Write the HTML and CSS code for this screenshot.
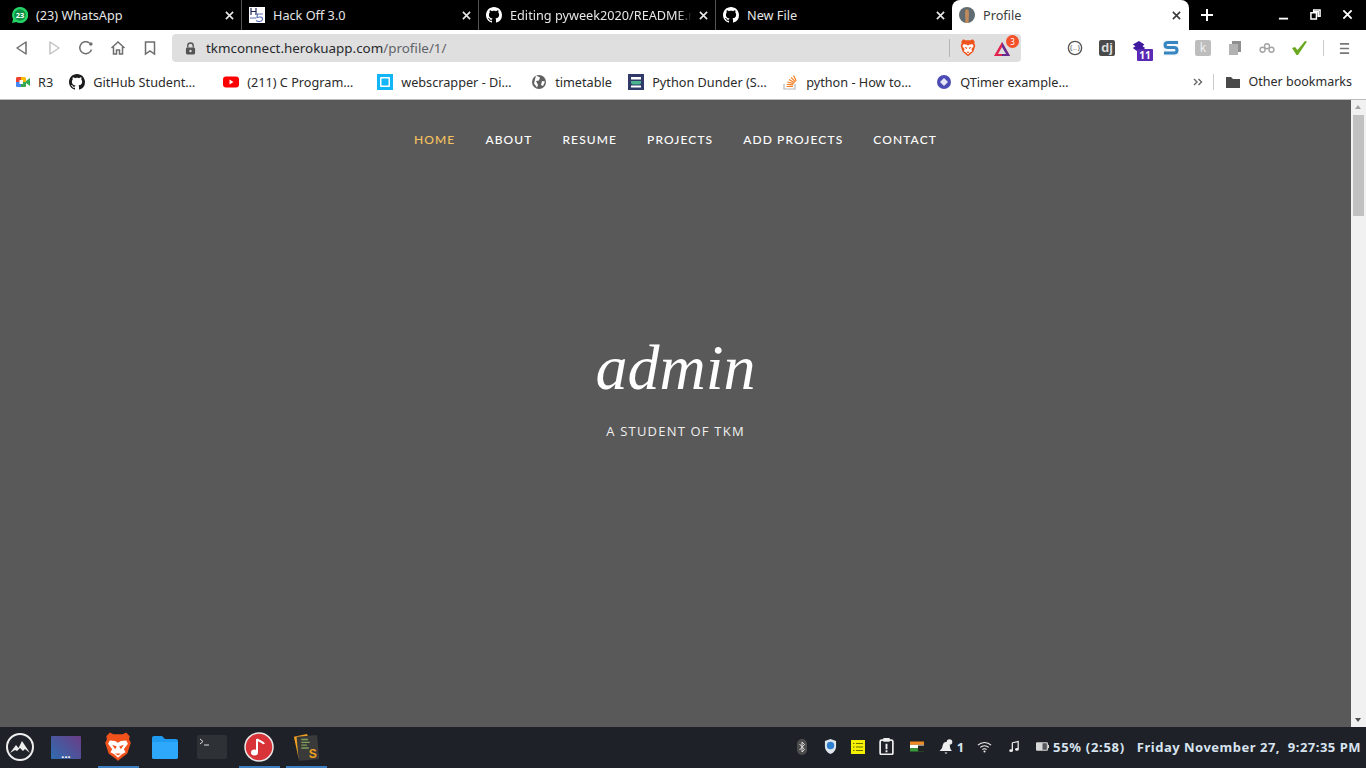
FILE: index.html
```html
<!DOCTYPE html>
<html lang="en">
<head>
    <title>Profile</title>
    <link rel="stylesheet" href="styles.css">
</head>
<body>
    <svg class="defs" width="0" height="0">
        <symbol id="gh" viewBox="0 0 16 16"><path fill="currentColor" d="M8 0C3.58 0 0 3.58 0 8c0 3.54 2.29 6.53 5.47 7.59.4.07.55-.17.55-.38 0-.19-.01-.82-.01-1.49-2.01.37-2.53-.49-2.69-.94-.09-.23-.48-.94-.82-1.13-.28-.15-.68-.52-.01-.53.63-.01 1.08.58 1.23.82.72 1.21 1.87.87 2.33.66.07-.52.28-.87.51-1.07-1.78-.2-3.64-.89-3.64-3.95 0-.87.31-1.59.82-2.15-.08-.2-.36-1.02.08-2.12 0 0 .67-.21 2.2.82.64-.18 1.32-.27 2-.27s1.36.09 2 .27c1.53-1.04 2.2-.82 2.2-.82.44 1.1.16 1.92.08 2.12.51.56.82 1.27.82 2.15 0 3.07-1.87 3.75-3.65 3.95.29.25.54.73.54 1.48 0 1.07-.01 1.93-.01 2.2 0 .21.15.46.55.38A8 8 0 0 0 16 8c0-4.42-3.58-8-8-8z"/></symbol>
        <symbol id="brave" viewBox="0 0 24 28" preserveAspectRatio="none"><path fill="#f1511b" d="M5 0.500l3 1.500h8l3-1.500 3 3.500-.5 3 1.500 3-3 10-7 6-1 1-1-1-7-6-3-10 1.500-3-.5-3z"/><path fill="#fff" d="M5 8l4.500.5 2.500 1.500 2.500-1.500L19 8l1.500 3-3.500 5 1.500 3-3 1.500L12 24l-3.500-3.500-3-1.500L7 16l-3.500-5z"/><path fill="#f1511b" d="M7 12l4 1.500-1.500 2.500zM17 12l-4 1.500 1.500 2.500zM9.500 20h5L12 22z"/></symbol>
        <symbol id="close" viewBox="0 0 10 10"><path d="M1 1l8 8M9 1l-8 8" stroke="currentColor" stroke-width="1.800" fill="none"/></symbol>
    </svg>

    <div class="tabbar">
        <div class="tab">
            <svg class="favicon" viewBox="0 0 16 16"><path fill="#25d366" d="M8 0a8 8 0 0 0-6.900 12L0 16l4.200-1.100A8 8 0 1 0 8 0z"/><circle cx="8" cy="8" r="5.800" fill="#0d8f45"/></svg>
            <span class="badge23">23</span>
            <span class="tab-title">(23) WhatsApp</span>
            <svg class="tab-x"><use href="#close"/></svg>
        </div>
        <div class="tab">
            <svg class="favicon" viewBox="0 0 16 16"><rect width="16" height="16" fill="#fff"/><path d="M2 1v7M7 1v7M2 4.500h5" stroke="#1f2a5a" stroke-width="1.200" fill="none"/><path d="M14 7H8.500L8 10.500c3-1 6-.5 5.500 2S9 15 7 13.500M1 11h6" stroke="#5a70b5" stroke-width="1.200" fill="none"/></svg>
            <span class="tab-title">Hack Off 3.0</span>
            <svg class="tab-x"><use href="#close"/></svg>
        </div>
        <div class="tab">
            <svg class="favicon tab-gh"><use href="#gh"/></svg>
            <span class="tab-title tab-fade">Editing pyweek2020/README.m</span>
            <svg class="tab-x tab-x-tight"><use href="#close"/></svg>
        </div>
        <div class="tab tab-last">
            <svg class="favicon tab-gh"><use href="#gh"/></svg>
            <span class="tab-title">New File</span>
            <svg class="tab-x"><use href="#close"/></svg>
        </div>
        <div class="tab tab-active">
            <svg class="favicon" viewBox="0 0 16 16"><circle cx="8" cy="8" r="8" fill="#5f6b70"/><path d="M6.500 2.500h3l.5 4-.5 9.500h-3L6 6.500z" fill="#c08a5c"/></svg>
            <span class="tab-title">Profile</span>
            <svg class="tab-x"><use href="#close"/></svg>
        </div>
        <svg class="newtab" viewBox="0 0 12 12"><path d="M6 0v12M0 6h12" stroke="#fff" stroke-width="2"/></svg>
        <div class="winctl">
            <svg viewBox="0 0 12 12"><path d="M1 10.500h10" stroke="#fff" stroke-width="2"/></svg>
            <svg viewBox="0 0 12 12"><path d="M4 1h7v7H9V3H4zM1 4h6v7H1z" fill="none" stroke="#fff" stroke-width="1.600"/></svg>
            <svg viewBox="0 0 12 12"><path d="M1.500 1.500l9 9M10.500 1.500l-9 9" stroke="#fff" stroke-width="2"/></svg>
        </div>
    </div>

    <div class="toolbar">
        <svg class="tool" viewBox="0 0 16 16"><path d="M12 2v12L3 8z" fill="none" stroke="#6e6e6e" stroke-width="1.500" stroke-linejoin="round"/></svg>
        <svg class="tool" viewBox="0 0 16 16"><path d="M4 2v12l9-6z" fill="none" stroke="#c2c2c2" stroke-width="1.500" stroke-linejoin="round"/></svg>
        <svg class="tool" viewBox="0 0 16 16"><path d="M13.500 9.500A6 6 0 1 1 11.500 3" fill="none" stroke="#6e6e6e" stroke-width="1.500"/><circle cx="12.800" cy="4" r="1.800" fill="#6e6e6e"/></svg>
        <svg class="tool" viewBox="0 0 16 16"><path d="M1.500 8L8 2l6.500 6M3.500 7v7H6.500v-4h3v4h3V7" fill="none" stroke="#6e6e6e" stroke-width="1.500"/></svg>
        <svg class="tool" viewBox="0 0 16 16"><path d="M3.500 2h9v12L8 11l-4.500 3z" fill="none" stroke="#6e6e6e" stroke-width="1.500"/></svg>
        <div class="omnibox">
            <svg class="lock" viewBox="0 0 12 14"><path d="M3 6V4a3 3 0 0 1 6 0v2" fill="none" stroke="#555" stroke-width="1.500"/><rect x="1" y="6" width="10" height="7.500" rx="1.500" fill="#555"/><circle cx="6" cy="9.700" r="1.300" fill="#dfdfdf"/></svg>
            <span class="url">tkmconnect.herokuapp.com<span class="url-path">/profile/1/</span></span>
            <span class="omni-sep"></span>
            <svg class="omni-brave"><use href="#brave"/></svg>
            <span class="bat-wrap">
                <svg class="omni-bat" viewBox="0 0 18 16"><path d="M9 1l8 14H1z" fill="#e0234e"/><path d="M9 1l8 14H9z" fill="#662d91"/><path d="M9 6l4 7H5z" fill="#dfdfdf"/></svg>
                <span class="bat-count">3</span>
            </span>
        </div>
        <div class="extensions">
            <svg class="ext" viewBox="0 0 18 18"><circle cx="9" cy="9" r="7.500" fill="#fff" stroke="#555" stroke-width="1.500"/><text x="9" y="11.500" class="ext-code">{..}</text></svg>
            <span class="ext-dj">dj</span>
            <span class="ext-wrap">
                <svg class="ext" viewBox="0 0 18 18"><path d="M9 1l6 4-2 2 3 2-7 5-7-5 3-2-3-2z" fill="#3f1aa0"/></svg>
                <span class="ext-11">11</span>
            </span>
            <svg class="ext" viewBox="0 0 16 16"><rect width="16" height="16" fill="#f4f7fa"/><path d="M15 2.500H5c-4 0-4 5 0 5h6c4 0 4 5.500 0 5.500H1" fill="none" stroke="#3585c0" stroke-width="3"/></svg>
            <span class="ext-k">k</span>
            <svg class="ext" viewBox="0 0 16 16"><rect x="5" y="1" width="9" height="11" fill="#8f8f8f"/><rect x="2" y="4" width="9" height="11" fill="#b2b2b2"/></svg>
            <svg class="ext" viewBox="0 0 18 12"><g fill="none" stroke="#a3a3a3" stroke-width="1.500"><circle cx="4" cy="8" r="2.800"/><circle cx="9" cy="4" r="2.800"/><circle cx="14" cy="8" r="2.800"/></g></svg>
            <svg class="ext" viewBox="0 0 16 16"><path d="M1 8l3-1 2.500 3L14 1l2 .5L7 15h-1.500z" fill="#6aa821"/></svg>
            <span class="tool-sep"></span>
            <svg class="menu" viewBox="0 0 12 14"><path d="M1 2h10M1 7h10M1 12h10" stroke="#777" stroke-width="1.800"/></svg>
        </div>
    </div>

    <div class="bookmarks">
        <div class="bm bm-tight">
            <svg class="bm-icon" viewBox="0 0 16 16"><rect x="1" y="3" width="10" height="10" rx="1.500" fill="#fbbc04"/><path d="M1 8V4.500A1.500 1.500 0 0 1 2.500 3H6v5z" fill="#ea4335"/><path d="M1 8h5v5H2.500A1.500 1.500 0 0 1 1 11.500z" fill="#4285f4"/><path d="M6 8h5v3.500a1.500 1.500 0 0 1-1.500 1.500H6z" fill="#34a853"/><path d="M11 7l4-3v8l-4-3z" fill="#34a853"/><rect x="4.500" y="6" width="3.500" height="4" fill="#fff"/></svg>
            <span>R3</span>
        </div>
        <div class="bm">
            <svg class="bm-icon bm-gh"><use href="#gh"/></svg>
            <span class="bm-long">GitHub Student…</span>
        </div>
        <div class="bm">
            <svg class="bm-icon" viewBox="0 0 16 16"><rect y="2.500" width="16" height="11" rx="3" fill="#f00"/><path d="M6.500 5.500v5l4-2.500z" fill="#fff"/></svg>
            <span class="bm-long">(211) C Program…</span>
        </div>
        <div class="bm">
            <svg class="bm-icon" viewBox="0 0 16 16"><rect width="16" height="16" fill="#12b5f5"/><rect x="3" y="3" width="10" height="10" rx="1" fill="#fff"/><rect x="4.500" y="4.500" width="7" height="7" fill="#12b5f5"/></svg>
            <span class="bm-long">webscrapper - Di…</span>
        </div>
        <div class="bm">
            <svg class="bm-icon" viewBox="0 0 16 16"><circle cx="8" cy="8" r="7" fill="#606060"/><path d="M5 1.500l4 2-1 3-3 .5 2 4-1 2.500-3-4zM11 7l3 .5-2 4.500-2-1z" fill="#fff"/></svg>
            <span class="bm-short">timetable</span>
        </div>
        <div class="bm">
            <svg class="bm-icon" viewBox="0 0 16 16"><rect width="16" height="16" fill="#2f3a68"/><rect x="3" y="3" width="10" height="2.500" fill="#fff"/><path d="M3 7h10v1.500a2 2 0 0 1-2 2H5a2 2 0 0 1-2-2z" fill="#47b58e"/><rect x="3" y="11.500" width="10" height="2" fill="#fff"/></svg>
            <span class="bm-long">Python Dunder (S…</span>
        </div>
        <div class="bm">
            <svg class="bm-icon" viewBox="0 0 16 16"><path d="M2 10v5h11v-5" fill="none" stroke="#b5b5b5" stroke-width="1.200"/><path d="M4.500 12.500h6.500M4.800 10.300l6.400.6M5.500 8l6.200 1.700M7 5.500l5.600 3.200M9 3.300l4.500 4.600M11.500 1.500l2.800 5.500" stroke="#f48024" stroke-width="1.200"/></svg>
            <span class="bm-long">python - How to…</span>
        </div>
        <div class="bm">
            <svg class="bm-icon" viewBox="0 0 16 16"><circle cx="8" cy="8" r="7" fill="#4b4bb5"/><path d="M8 4l4 4-4 4-4-4z" fill="#e6e6f7"/></svg>
            <span>QTimer example…</span>
        </div>
        <div class="bm-right">
            <svg class="bm-more" viewBox="0 0 10 8"><path d="M1 1l3 3-3 3M5.500 1l3 3-3 3" fill="none" stroke="#666" stroke-width="1.400"/></svg>
            <span class="bm-sep"></span>
            <div class="bm">
                <svg class="bm-icon" viewBox="0 0 16 16"><path d="M1 3h5l2 2h7v9H1z" fill="#4a4a4a"/></svg>
                <span>Other bookmarks</span>
            </div>
        </div>
    </div>

    <div class="viewport">
        <main class="page">
            <nav class="nav">
                <a class="nav-link nav-current">HOME</a>
                <a class="nav-link">ABOUT</a>
                <a class="nav-link">RESUME</a>
                <a class="nav-link">PROJECTS</a>
                <a class="nav-link">ADD PROJECTS</a>
                <a class="nav-link">CONTACT</a>
            </nav>
            <section class="hero">
                <h1 class="hero-name">admin</h1>
                <p class="hero-sub">A STUDENT OF TKM</p>
            </section>
        </main>
        <div class="scrollbar">
            <span class="arrow-up"></span>
            <span class="thumb"></span>
            <span class="arrow-down"></span>
        </div>
    </div>

    <footer class="taskbar">
        <div class="launchers">
            <span class="launch launch-menu">
                <svg viewBox="0 0 28 28"><circle cx="14" cy="14" r="13" fill="#20232a" stroke="#eee" stroke-width="2"/><path d="M4 20l6-8 2.500 3L16 8l8 12-5-4-2 2-3-3-3 3-2-1z" fill="#eee"/></svg>
            </span>
            <span class="launch launch-desk"><span class="desk-dots">...</span></span>
            <span class="launch launch-on">
                <svg class="brave-big"><use href="#brave"/></svg>
            </span>
            <span class="launch">
                <svg viewBox="0 0 28 24"><path d="M1 3a2 2 0 0 1 2-2h8l3 3h11a2 2 0 0 1 2 2v16a2 2 0 0 1-2 2H3a2 2 0 0 1-2-2z" fill="#1e9bf0"/><path d="M1 7h26v15a2 2 0 0 1-2 2H3a2 2 0 0 1-2-2z" fill="#2ea8fb"/></svg>
            </span>
            <span class="launch">
                <svg class="term" viewBox="0 0 30 24"><rect width="30" height="24" rx="2" fill="#2e3136"/><path d="M3 4l3 2.500L3 9M7 10h5" fill="none" stroke="#ddd" stroke-width="1"/></svg>
            </span>
            <span class="launch launch-on launch-music">
                <svg viewBox="0 0 30 30"><circle cx="15" cy="15" r="14" fill="#d9333a" stroke="#e8e8e8" stroke-width="1.500"/><path d="M13 7v13M13 7c2 3 6 2 7 5" fill="none" stroke="#fff" stroke-width="2"/><ellipse cx="10.500" cy="20.500" rx="3.500" ry="3" fill="#fff"/></svg>
            </span>
            <span class="launch launch-on">
                <svg viewBox="0 0 28 30"><path d="M1 4l14-3 3 6-12 20z" fill="#f0a020"/><rect x="5" y="3" width="22" height="26" rx="1" fill="#3a3a3a" transform="rotate(-5 16 16)"/><path d="M9 7h7M9 10h9M9 13h6M9 16h8" stroke="#7fa05a" stroke-width="1.500"/><text x="17" y="27" class="sublime-s">S</text></svg>
            </span>
        </div>
        <div class="tray">
            <svg class="tray-bt" viewBox="0 0 10 16"><rect width="10" height="16" rx="5" fill="#4c4c4c"/><path d="M2.500 5l5 5.500L5 13V3l2.500 2.500-5 5.500" fill="none" stroke="#ddd" stroke-width="1"/></svg>
            <svg class="tray-shield" viewBox="0 0 14 16"><path d="M7 0l6 2v6c0 4-3 7-6 8-3-1-6-4-6-8V2z" fill="#dfe6ee"/><circle cx="7" cy="7" r="4" fill="#2f7fd0"/></svg>
            <svg class="tray-list" viewBox="0 0 14 14"><rect width="14" height="14" fill="#f4f000"/><path d="M2 3.500h1.500M5 3.500h7M2 7h1.500M5 7h7M2 10.500h1.500M5 10.500h7" stroke="#6b6b00" stroke-width="1.200"/></svg>
            <svg class="tray-clip" viewBox="0 0 14 16"><rect x="1" y="2" width="12" height="13.500" rx="1.500" fill="none" stroke="#eee" stroke-width="1.600"/><rect x="4" y="0" width="6" height="3.500" fill="#eee"/><path d="M7 5.500v5M7 11.500v2" stroke="#eee" stroke-width="1.800"/></svg>
            <svg class="tray-flag" viewBox="0 0 14 10"><rect width="14" height="3.300" fill="#f08a24"/><rect y="3.300" width="14" height="3.400" fill="#fff"/><rect y="6.700" width="14" height="3.300" fill="#3a9a3a"/><rect x="8" y="4" width="6" height="6" fill="#222"/></svg>
            <span class="tray-item">
                <svg class="tray-bell" viewBox="0 0 14 16"><path d="M7 3c3 0 4 2 4 5 0 2 2 4 2 4H1c-1 0 1-1 2-3 1-3 1-6 4-6zM5.500 13.500h3L7 15z" fill="#eee"/><circle cx="10.500" cy="3" r="2.800" fill="#eee"/></svg>
                <span class="tray-text">1</span>
            </span>
            <svg class="tray-wifi" viewBox="0 0 16 12"><path d="M1 4a10 10 0 0 1 14 0M3.500 6.500a6.500 6.500 0 0 1 9 0M5.800 8.800a3 3 0 0 1 4.400 0" fill="none" stroke="#eee" stroke-width="1.200"/><circle cx="8" cy="10.800" r="1.100" fill="#eee"/></svg>
            <svg class="tray-note" viewBox="0 0 12 14"><path d="M4 2.500L11 1v9M4 2.500V12" fill="none" stroke="#eee" stroke-width="1.500"/><ellipse cx="2.500" cy="12" rx="2.200" ry="1.700" fill="#eee"/><ellipse cx="9.500" cy="10.500" rx="2.200" ry="1.700" fill="#eee"/></svg>
            <span class="tray-item tray-battery">
                <svg class="tray-batt" viewBox="0 0 12 8"><rect width="11" height="8" rx="1" fill="#d8d8d8"/><rect x="6" y="1" width="4" height="6" fill="#55585c"/><rect x="11" y="2.500" width="1" height="3" fill="#d8d8d8"/></svg>
                <span class="tray-text tray-spaced">55% (2:58)</span>
            </span>
            <span class="tray-text tray-spaced tray-clock">Friday November 27,&nbsp; 9:27:35 PM</span>
        </div>
    </footer>
</body>
</html>
```

FILE: styles.css
```css
*{box-sizing: border-box;}

html, body{
    margin: 0;
    height: 100%;
}

body{
    display: flex;
    flex-direction: column;
    height: 768px;
    overflow: hidden;
    font-family: "Noto Sans", sans-serif;
    background-color: #fff;
}

.defs{
    position: absolute;
}

/* tab strip */
.tabbar{
    display: flex;
    align-items: flex-end;
    height: 30px;
    padding-left: 5px;
    background-color: #000;
    color: #e6e6e6;
    flex-shrink: 0;
}

.tab{
    position: relative;
    display: flex;
    align-items: center;
    width: 237px;
    height: 30px;
    padding-left: 7px;
    border-right: 1px solid #555;
    font-size: 12.7px;
}

.tab:nth-child(n+4){
    border-right: none;
}

.tab-last{
    width: 236px;
}

.tab-active{
    background-color: #fff;
    color: #3c3c3c;
    border-radius: 8px 8px 0 0;
    border-right: none;
}

.favicon{
    width: 16px;
    height: 16px;
    flex-shrink: 0;
}

.tab-gh{
    color: #fff;
}

.badge23{
    position: absolute;
    left: 7px;
    width: 16px;
    text-align: center;
    font-size: 7.5px;
    font-weight: bold;
    color: #fff;
}

.tab-title{
    margin-left: 8px;
    width: 180px;
    flex-shrink: 0;
    overflow: hidden;
    white-space: nowrap;
}

.tab-fade{
    width: 196px;
    -webkit-mask-image: linear-gradient(to right, #000 168px, transparent 182px);
    mask-image: linear-gradient(to right, #000 168px, transparent 182px);
}

.tab-x{
    width: 9px;
    height: 9px;
    margin-left: 9px;
    flex-shrink: 0;
}

.tab-x-tight{
    margin-left: -7px;
}

.newtab{
    width: 12px;
    height: 12px;
    margin: 0 0 9px 12px;
}

.winctl{
    display: flex;
    gap: 21px;
    margin: 0 0 10px 65px;
}

.winctl svg{
    width: 11px;
    height: 11px;
}

/* address bar */
.toolbar{
    display: flex;
    align-items: center;
    height: 36px;
    padding-left: 14px;
    flex-shrink: 0;
}

.tool{
    width: 16px;
    height: 16px;
    margin-right: 16px;
}

.omnibox{
    display: flex;
    align-items: center;
    width: 849px;
    height: 28px;
    margin-left: -2px;
    padding-left: 13px;
    background-color: #dfdfdf;
    border-radius: 4px;
}

.lock{
    width: 11px;
    height: 13px;
}

.url{
    margin-left: 10px;
    width: 743px;
    font-size: 13.4px;
    color: #26292c;
    white-space: nowrap;
}

.url-path{
    color: #5f6368;
}

.omni-sep{
    width: 1px;
    height: 18px;
    background-color: #b5b5b5;
}

.omni-brave{
    width: 16px;
    height: 18px;
    margin-left: 10px;
}

.bat-wrap{
    position: relative;
    margin-left: 17px;
    height: 16px;
}

.omni-bat{
    width: 18px;
    height: 16px;
}

.bat-count{
    position: absolute;
    left: 13px;
    top: -5px;
    width: 13px;
    height: 13px;
    border-radius: 50%;
    background-color: #f4502a;
    color: #fff;
    font-size: 8px;
    line-height: 13px;
    text-align: center;
}

.extensions{
    display: flex;
    align-items: center;
    gap: 16px;
    margin-left: 46px;
}

.ext{
    display: block;
    width: 16px;
    height: 16px;
}

.ext-dj{
    width: 16px;
    height: 16px;
    background-color: #4a4a4a;
    border-radius: 2px;
    color: #ddd;
    font-family: "Liberation Sans", sans-serif;
    font-size: 13px;
    font-weight: bold;
    line-height: 15px;
    text-align: center;
}

.ext-wrap{
    position: relative;
}

.ext-11{
    position: absolute;
    left: 6px;
    top: 9px;
    width: 16px;
    height: 12px;
    background-color: #5a2ab5;
    border-radius: 1px;
    color: #fff;
    font-size: 10px;
    font-weight: bold;
    line-height: 12px;
    text-align: center;
}

.ext-k{
    width: 16px;
    height: 16px;
    background-color: #bdbdbd;
    border-radius: 2px;
    color: #eee;
    font-size: 12px;
    line-height: 15px;
    text-align: center;
}

.tool-sep{
    width: 1px;
    height: 16px;
    background-color: #ccc;
}

.menu{
    width: 11px;
    height: 13px;
    margin-left: -1px;
}

/* bookmarks bar */
.bookmarks{
    display: flex;
    align-items: center;
    gap: 16px;
    height: 34px;
    padding: 0 14px 2px 15px;
    border-bottom: 1px solid #bbb;
    font-size: 12.7px;
    color: #2b2b2b;
    white-space: nowrap;
    flex-shrink: 0;
}

.bm{
    display: flex;
    align-items: center;
    gap: 8px;
}

.bm-tight{
    gap: 7px;
}

.bm-icon{
    width: 16px;
    height: 16px;
    flex-shrink: 0;
}

.bm-gh{
    color: #1b1b1b;
}

.bm-long{
    width: 114px;
}

.bm-short{
    width: 57px;
}

.bm-right{
    display: flex;
    align-items: center;
    margin-left: auto;
    font-size: 12.5px;
}

.bm-more{
    width: 10px;
    height: 8px;
}

.bm-sep{
    width: 1px;
    height: 16px;
    margin: 0 11px 0 10px;
    background-color: #ccc;
}

/* page */
.viewport{
    display: flex;
    flex: 1;
    min-height: 0;
}

.page{
    flex: 1;
    background-color: #595959;
}

.nav{
    display: flex;
    justify-content: center;
    gap: 30px;
    padding-top: 32px;
    font-family: Lato, sans-serif;
    font-size: 12px;
    letter-spacing: 1.1px;
    font-weight: 500;
    color: #fff;
}

.nav-link{
    line-height: 16px;
}

.nav-current{
    color: #f7c35f;
}

.hero{
    text-align: center;
    margin-top: 180px;
    color: #fff;
}

.hero-name{
    margin: 0;
    font-family: "Liberation Serif", serif;
    font-style: italic;
    font-weight: normal;
    font-size: 64px;
    line-height: 80px;
}

.hero-sub{
    margin: 15px 0 0;
    font-family: "Open Sans", sans-serif;
    font-size: 13px;
    letter-spacing: 1.2px;
    line-height: 16px;
    color: #f0f0f0;
}

.scrollbar{
    position: relative;
    width: 15px;
    background-color: #f1f1f1;
}

.thumb{
    position: absolute;
    left: 2px;
    top: 15px;
    width: 11px;
    height: 101px;
    background-color: #c1c1c1;
}

.arrow-up, .arrow-down{
    position: absolute;
    left: 4px;
    width: 0;
    height: 0;
    border-left: 3.5px solid transparent;
    border-right: 3.5px solid transparent;
}

.arrow-up{
    top: 5px;
    border-bottom: 4px solid #a3a3a3;
}

.arrow-down{
    bottom: 5px;
    border-top: 4px solid #505050;
}

/* desktop panel */
.taskbar{
    display: flex;
    align-items: center;
    justify-content: space-between;
    height: 41px;
    background-color: #1f2128;
    flex-shrink: 0;
}

.launchers{
    display: flex;
    align-items: center;
    height: 100%;
    padding-left: 5px;
    gap: 6px;
}

.launch{
    display: flex;
    align-items: center;
    justify-content: center;
    width: 41px;
    height: 100%;
    padding: 1px 2px 0 0;
    border-bottom: 2px solid transparent;
}

.launch svg{
    width: 28px;
    height: 28px;
}

.launch-menu{
    width: 30px;
    padding-right: 0;
}

.launch-desk{
    width: 30px;
    margin: 0 11px 0 10px;
    padding-right: 0;
}

.desk-dots{
    display: flex;
    align-items: flex-end;
    justify-content: center;
    width: 30px;
    height: 23px;
    padding-bottom: 1px;
    background: linear-gradient(45deg, #2f6cb0, #6a3d85);
    border-radius: 1px;
    color: #fff;
    font-size: 11px;
    font-weight: bold;
    line-height: 9px;
}

.launch-on{
    border-bottom-color: #3d7ec0;
}

.launch-music svg{
    width: 30px;
    height: 30px;
}

.launch .brave-big{
    width: 28px;
    height: 30px;
}

.launch .term{
    width: 30px;
    height: 24px;
}

.tray{
    display: flex;
    align-items: center;
    gap: 14px;
    padding: 0 5px 2px 0;
}

.tray svg{
    display: block;
}

.tray-bt{
    width: 10px;
    height: 16px;
}

.tray-shield{
    width: 13px;
    height: 15px;
    margin-left: 3px;
}

.tray-list{
    width: 14px;
    height: 14px;
}

.tray-clip{
    width: 15px;
    height: 17px;
}

.tray-flag{
    width: 14px;
    height: 11px;
    margin-left: 2px;
}

.tray-bell{
    width: 16px;
    height: 16px;
}

.tray-wifi{
    width: 15px;
    height: 12px;
    margin-left: -1px;
}

.tray-note{
    width: 10px;
    height: 13px;
    margin-left: 3px;
}

.tray-batt{
    width: 13px;
    height: 9px;
}

.tray-item{
    display: flex;
    align-items: center;
    gap: 3px;
}

.tray-battery{
    gap: 4px;
    margin-left: 3px;
}

.tray-text{
    font-family: "Noto Sans", sans-serif;
    font-size: 13px;
    font-weight: bold;
    color: #d7e3ee;
    white-space: nowrap;
}

.tray-spaced{
    letter-spacing: 0.5px;
}

.tray-battery .tray-spaced{
    letter-spacing: 0.7px;
}

.tray-clock{
    margin-left: -2px;
}

.ext-code{
    font-family: "DejaVu Sans", sans-serif;
    font-size: 7px;
    text-anchor: middle;
    fill: #333;
}

.sublime-s{
    font-family: "Liberation Sans", sans-serif;
    font-size: 13px;
    font-weight: bold;
    fill: #f0a020;
}
```
